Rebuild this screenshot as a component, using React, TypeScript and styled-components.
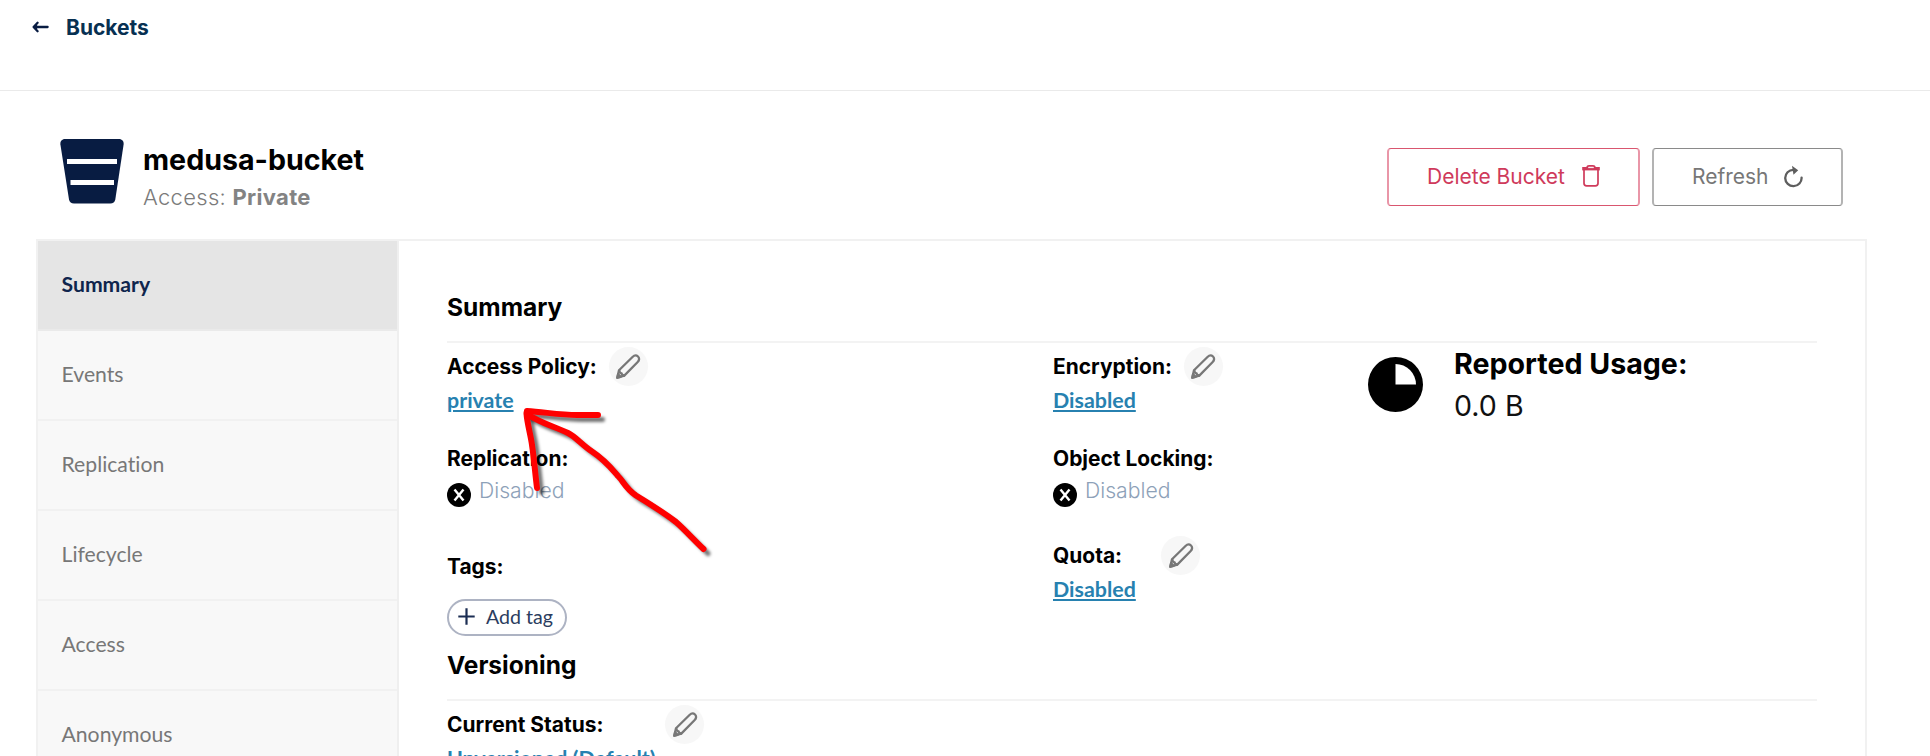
import React from "react";
import styled, { createGlobalStyle } from "styled-components";

const GlobalStyle = createGlobalStyle`
  * { box-sizing: border-box; }
  html, body { margin: 0; height: 100%; overflow: hidden; background: #fff; }
  body { font-family: Inter, "Liberation Sans", sans-serif; font-size: 20px; color: #000; font-variant-ligatures: none; }
  svg { display: block; flex: none; }
`;

const Page = styled.div`
  position: relative;
  width: 1930px;
  height: 756px;
  overflow: hidden;
`;

const TopBar = styled.header`
  display: flex;
  align-items: flex-start;
  height: 91px;
  padding: 15px 0 0 32px;
  border-bottom: 1px solid #eaeaea;
`;

const BackLink = styled.a`
  display: flex;
  align-items: center;
  gap: 17px;
  height: 24px;
  color: #073052;
  font-weight: 700;
  font-size: 21px;
`;

const BucketHeader = styled.section`
  display: flex;
  align-items: flex-start;
  height: 148px;
  padding: 48px 87px 0 60px;
`;

const Titles = styled.div`
  flex: 1;
  padding: 4px 0 0 18px;
`;

const BucketName = styled.h1`
  margin: 0;
  font-size: 28.6px;
  font-weight: 700;
  line-height: 34px;
`;

const AccessLine = styled.div`
  margin-top: 7px;
  font-size: 22px;
  font-weight: 300;
  line-height: 26px;
  letter-spacing: 0.3px;
  color: #7b7b7b;
  strong { font-weight: 700; color: #838383; }
`;

const ActionButton = styled.button<{ $tone: string; $line: string; $side: string; $width: number }>`
  display: flex;
  align-items: center;
  justify-content: space-between;
  width: ${(p) => p.$width}px;
  height: 58px;
  margin: 9px 0 0 12px;
  padding: 0 38px 2px 38px;
  border-style: solid;
  border-width: 1px 2px;
  border-color: ${(p) => `${p.$line} ${p.$side}`};
  border-radius: 4px;
  background: #fff;
  color: ${(p) => p.$tone};
  font: 400 21px Inter, sans-serif;
  white-space: nowrap;
`;

const Panel = styled.main`
  display: flex;
  width: 1831px;
  height: 560px;
  margin-left: 36px;
  border: 2px solid #f1f1f1;
`;

const Sidebar = styled.nav`
  width: 361px;
  flex: none;
  background: #f8f8f8;
  border-right: 2px solid #efefef;
`;

const Tab = styled.div<{ $active?: boolean }>`
  display: flex;
  align-items: center;
  height: 90px;
  padding: 0 0 3px 23.5px;
  border-bottom: 2px solid ${(p) => (p.$active ? "#eaeaea" : "#f1f1f1")};
  background: ${(p) => (p.$active ? "#e5e5e5" : "#f8f8f8")};
  color: ${(p) => (p.$active ? "#0f254d" : "#777")};
  font-family: Lato, sans-serif;
  font-weight: ${(p) => (p.$active ? 700 : 400)};
  font-size: 21.2px;
`;

const Content = styled.div`
  flex: 1;
  padding: 46px 48px 0 48px;
`;

const SectionTitle = styled.h2`
  margin: 0;
  height: 56px;
  padding-top: 5px;
  border-bottom: 2px solid #f3f3f3;
  font-size: 24.5px;
  font-weight: 700;
  line-height: 30px;
`;

const SummaryGrid = styled.div`
  display: grid;
  grid-template-columns: 606px 315px 1fr;
  height: 302px;
`;

const Column = styled.div`
  padding-top: 4px;
`;

const LabelRow = styled.div<{ $gap?: number; $tall?: boolean; $top?: number }>`
  display: flex;
  align-items: center;
  gap: ${(p) => p.$gap ?? 12}px;
  height: ${(p) => (p.$tall ? 39 : 24)}px;
  margin-top: ${(p) => p.$top ?? 0}px;
  font-size: 20.95px;
  font-weight: 700;
  white-space: nowrap;
`;

const EditCircle = styled.span`
  display: flex;
  align-items: center;
  justify-content: center;
  width: 39px;
  height: 39px;
  border-radius: 50%;
  background: #f7f7f7;
`;

const ValueLink = styled.a`
  display: block;
  height: 29px;
  line-height: 29px;
  color: #2781b0;
  font-family: Lato, sans-serif;
  font-size: 21.4px;
  font-weight: 700;
  text-decoration: underline;
`;

const StatusRow = styled.div`
  display: flex;
  align-items: flex-start;
  gap: 8px;
  height: 30px;
  margin-top: 8px;
  color: #8da1b8;
  font-size: 21.2px;
  font-weight: 300;
  line-height: 25px;
  svg { margin-top: 5px; }
`;

const TagButton = styled.button`
  display: flex;
  align-items: center;
  gap: 11px;
  width: 120px;
  height: 37px;
  margin-top: 21px;
  padding: 0 0 2px 9px;
  border: 2px solid #adb3c3;
  border-radius: 19px;
  background: #fff;
  color: #2b3d60;
  font: 400 19.6px Lato, sans-serif;
  white-space: nowrap;
`;

const Usage = styled.div`
  display: flex;
  gap: 31px;
  padding: 14px 0 0 0;
`;

const UsageText = styled.div`
  margin-top: -10px;
  font-size: 28.6px;
  font-weight: 400;
  line-height: 34px;
  color: #111;
  strong { display: block; margin-bottom: 8px; font-weight: 700; color: #000; }
`;

const Annotation = styled.svg`
  position: absolute;
  left: 500px;
  top: 390px;
`;

const BackArrow = () => (
  <svg width="17" height="12" viewBox="0 0 17 12" fill="none" stroke="#081c42" strokeWidth="2.3" strokeLinecap="round" strokeLinejoin="round">
    <path d="M15.600 6H2M5.600 1.800 1.600 6l4 4.200M4 4v4" />
  </svg>
);

const BucketIcon = () => (
  <svg width="65" height="65" viewBox="0 0 65 65">
    <path d="M5 0h54c3 0 5 2.300 4.600 5.500L55.300 60.500c-.5 2.800-2.300 4-5 4H14c-2.700 0-4.500-1.200-5-4L.4 5.500C0 2.300 2 0 5 0Z" fill="#081c42" />
    <path d="M7 20h50v5H7zM10.500 41h43.500v5H10.500z" fill="#fff" />
  </svg>
);

const TrashIcon = () => (
  <svg width="18" height="22" viewBox="0 0 18 22" fill="none" stroke="currentColor">
    <path d="M2 4.500v13.700c0 1.700.9 2.600 2.600 2.600h8.800c1.700 0 2.600-.9 2.600-2.600V4.500" strokeWidth="1.700" />
    <path d="M.2 3.700h17.600" strokeWidth="3.400" />
    <path d="M5 2.200C5.200 1.100 5.900.9 7 .9h4c1.100 0 1.800.2 2 1.300" strokeWidth="1.600" />
    <path d="M6.200 2.600h5.600" stroke="#fff" strokeWidth="1" />
  </svg>
);

const RefreshIcon = () => (
  <svg width="19" height="23" viewBox="0 0 19 23" fill="none">
    <path d="M17.600 12.600A8.200 8.200 0 1 1 9.400 4.800h1.400" stroke="#5e5e5e" strokeWidth="2.300" strokeLinecap="round" />
    <path d="m8 .8 6.200 4.400L9.500 9.800Z" fill="#5e5e5e" />
  </svg>
);

const PencilIcon = () => (
  <svg width="26" height="26" viewBox="0 0 26 26" fill="none" stroke="#777" strokeWidth="2.300" strokeLinejoin="round" strokeLinecap="round">
    <path d="M2.300 23.700 4 16.200 17.500 3c1.900-1.900 4-1.900 5.500-.5s1.500 3.700-.3 5.500L9.300 21.600Z" />
    <path d="M4.300 16.600c.3 1.800 1 2.600 2.300 2.700.1 1.300.9 2 2.500 2.200" />
    <path d="m2.300 23.700.8-3.500 2.500 2.700Z" fill="#777" />
  </svg>
);

const DisabledIcon = () => (
  <svg width="24" height="24" viewBox="0 0 24 24">
    <circle cx="12" cy="12" r="12" fill="#000" />
    <path d="m7.500 6.500 9 11M16.500 6.500l-9 11" stroke="#fff" strokeWidth="2.400" />
  </svg>
);

const PlusIcon = () => (
  <svg width="17" height="17" viewBox="0 0 17 17" stroke="#1b2d53" strokeWidth="2.200">
    <path d="M8.500.3v16.400M.3 8.500h16.400" />
  </svg>
);

const PieIcon = () => (
  <svg width="55" height="55" viewBox="0 0 55 55">
    <circle cx="27.500" cy="27.500" r="27.500" fill="#000" />
    <path d="M27.500 7a20.500 20.500 0 0 1 20.500 20.500H27.500Z" fill="#fff" />
  </svg>
);

const Edit = () => (
  <EditCircle>
    <PencilIcon />
  </EditCircle>
);

const strokes = [
  "M27 21C44 22 60 25 77 25H98",
  "M26.500 23C27 33 31 46 32 55C34 68 35 82 37 98",
  "M27 24C42 34 54 36 68 43C76 47 82 55 92 61.500C105 70 112 79 118 86C124 92 125 98 136 105.500C150 114 163 122 176 132C185 140 194 150 203.500 159",
];

const tabs = ["Summary", "Events", "Replication", "Lifecycle", "Access", "Anonymous"];

export default function App() {
  return (
    <Page>
      <GlobalStyle />
      <TopBar>
        <BackLink>
          <BackArrow />
          Buckets
        </BackLink>
      </TopBar>
      <BucketHeader>
        <BucketIcon />
        <Titles>
          <BucketName>medusa-bucket</BucketName>
          <AccessLine>
            Access: <strong>Private</strong>
          </AccessLine>
        </Titles>
        <ActionButton $tone="#cf3a5b" $line="#d9566f" $side="#e996a8" $width={253}>
          Delete Bucket
          <TrashIcon />
        </ActionButton>
        <ActionButton $tone="#777" $line="#8a8a8a" $side="#b3b3b3" $width={191}>
          Refresh
          <RefreshIcon />
        </ActionButton>
      </BucketHeader>
      <Panel>
        <Sidebar>
          {tabs.map((t, i) => (
            <Tab key={t} $active={i === 0}>
              {t}
            </Tab>
          ))}
        </Sidebar>
        <Content>
          <SectionTitle>Summary</SectionTitle>
          <SummaryGrid>
            <Column>
              <LabelRow $tall>
                Access Policy:
                <Edit />
              </LabelRow>
              <ValueLink>private</ValueLink>
              <LabelRow $top={31}>Replication:</LabelRow>
              <StatusRow>
                <DisabledIcon />
                Disabled
              </StatusRow>
              <LabelRow $top={46}>Tags:</LabelRow>
              <TagButton>
                <PlusIcon />
                Add tag
              </TagButton>
            </Column>
            <Column>
              <LabelRow $tall>
                Encryption:
                <Edit />
              </LabelRow>
              <ValueLink>Disabled</ValueLink>
              <LabelRow $top={31}>Object Locking:</LabelRow>
              <StatusRow>
                <DisabledIcon />
                Disabled
              </StatusRow>
              <LabelRow $tall $top={28} $gap={39}>
                Quota:
                <Edit />
              </LabelRow>
              <ValueLink>Disabled</ValueLink>
            </Column>
            <Usage>
              <PieIcon />
              <UsageText>
                <strong>Reported Usage:</strong>
                0.0 B
              </UsageText>
            </Usage>
          </SummaryGrid>
          <SectionTitle>Versioning</SectionTitle>
          <Column>
            <LabelRow $tall $gap={62}>
              Current Status:
              <Edit />
            </LabelRow>
            <ValueLink>Unversioned (Default)</ValueLink>
          </Column>
        </Content>
      </Panel>
      <Annotation width="220" height="180" viewBox="0 0 220 180" fill="none" strokeLinecap="round" strokeLinejoin="round">
        <defs>
          <filter id="soft" x="-10%" y="-10%" width="120%" height="120%">
            <feGaussianBlur stdDeviation="1.500" />
          </filter>
        </defs>
        <g transform="translate(4.500 4.500)" stroke="#000" strokeOpacity=".55" strokeWidth="5" filter="url(#soft)">
          {strokes.map((d) => (
            <path key={d} d={d} />
          ))}
        </g>
        <g stroke="#f00" strokeWidth="6">
          {strokes.map((d) => (
            <path key={d} d={d} />
          ))}
        </g>
      </Annotation>
    </Page>
  );
}
